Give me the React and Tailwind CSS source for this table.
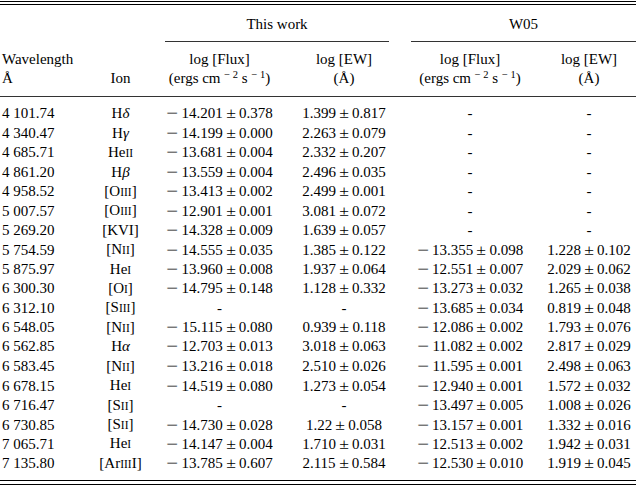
import React from "react";

const cols = "grid grid-cols-[92px_57px_141px_108px_144px_94px]";

const Sc = ({ children }) => <span className="text-[11.5px]">{children}</span>;
const G = ({ children }) => <span className="italic">{children}</span>;

const ions = {
  Hd: <>H<G>δ</G></>,
  Hg: <>H<G>γ</G></>,
  HeII: <>He<Sc>II</Sc></>,
  Hb: <>H<G>β</G></>,
  OIII: <>[O<Sc>III</Sc>]</>,
  KVI: <>[KVI]</>,
  NII: <>[N<Sc>II</Sc>]</>,
  HeI: <>He<Sc>I</Sc></>,
  OI: <>[O<Sc>I</Sc>]</>,
  SIII: <>[S<Sc>III</Sc>]</>,
  Ha: <>H<G>α</G></>,
  SII: <>[S<Sc>II</Sc>]</>,
  ArIIII: <>[Ar<Sc>III</Sc>I]</>,
};

const rows = [
  ["4 101.74", "Hd", "− 14.201 ± 0.378", "1.399 ± 0.817", "-", "-"],
  ["4 340.47", "Hg", "− 14.199 ± 0.000", "2.263 ± 0.079", "-", "-"],
  ["4 685.71", "HeII", "− 13.681 ± 0.004", "2.332 ± 0.207", "-", "-"],
  ["4 861.20", "Hb", "− 13.559 ± 0.004", "2.496 ± 0.035", "-", "-"],
  ["4 958.52", "OIII", "− 13.413 ± 0.002", "2.499 ± 0.001", "-", "-"],
  ["5 007.57", "OIII", "− 12.901 ± 0.001", "3.081 ± 0.072", "-", "-"],
  ["5 269.20", "KVI", "− 14.328 ± 0.009", "1.639 ± 0.057", "-", "-"],
  ["5 754.59", "NII", "− 14.555 ± 0.035", "1.385 ± 0.122", "− 13.355 ± 0.098", "1.228 ± 0.102"],
  ["5 875.97", "HeI", "− 13.960 ± 0.008", "1.937 ± 0.064", "− 12.551 ± 0.007", "2.029 ± 0.062"],
  ["6 300.30", "OI", "− 14.795 ± 0.148", "1.128 ± 0.332", "− 13.273 ± 0.032", "1.265 ± 0.038"],
  ["6 312.10", "SIII", "-", "-", "− 13.685 ± 0.034", "0.819 ± 0.048"],
  ["6 548.05", "NII", "− 15.115 ± 0.080", "0.939 ± 0.118", "− 12.086 ± 0.002", "1.793 ± 0.076"],
  ["6 562.85", "Ha", "− 12.703 ± 0.013", "3.018 ± 0.063", "− 11.082 ± 0.002", "2.817 ± 0.029"],
  ["6 583.45", "NII", "− 13.216 ± 0.018", "2.510 ± 0.026", "− 11.595 ± 0.001", "2.498 ± 0.063"],
  ["6 678.15", "HeI", "− 14.519 ± 0.080", "1.273 ± 0.054", "− 12.940 ± 0.001", "1.572 ± 0.032"],
  ["6 716.47", "SII", "-", "-", "− 13.497 ± 0.005", "1.008 ± 0.026"],
  ["6 730.85", "SII", "− 14.730 ± 0.028", "1.22 ± 0.058", "− 13.157 ± 0.001", "1.332 ± 0.016"],
  ["7 065.71", "HeI", "− 14.147 ± 0.004", "1.710 ± 0.031", "− 12.513 ± 0.002", "1.942 ± 0.031"],
  ["7 135.80", "ArIIII", "− 13.785 ± 0.607", "2.115 ± 0.584", "− 12.530 ± 0.010", "1.919 ± 0.045"],
];

function Num({ s }) {
  if (s === "-") return <span>-</span>;
  let neg = false;
  let t = s;
  if (t.startsWith("− ")) {
    neg = true;
    t = t.slice(2);
  }
  const [a, b] = t.split(" ± ");
  return (
    <span className="inline-flex items-baseline">
      {neg && <span className="inline-block scale-x-[1.4] origin-left mr-[7px]">−</span>}
      <span>{a}</span>
      <span className="inline-block scale-x-[1.18] mx-[4px]">±</span>
      <span>{b}</span>
    </span>
  );
}

const Units = () => (
  <>
    (ergs cm <sup className="text-[10.5px] top-[-0.45em]">− 2</sup> s <sup className="text-[10.5px] top-[-0.45em]">− 1</sup>)
  </>
);

export default function App() {
  return (
    <div
      className="w-[636px] h-[488px] bg-white text-black text-[15px] leading-[19px] overflow-hidden pt-px whitespace-nowrap"
      style={{ fontFamily: '"Liberation Serif", "Times New Roman", serif' }}
    >
      <div className="h-px bg-black" />
      <div className="h-px bg-black mt-[2px]" />

      <div className={`${cols} mt-[10px]`}>
        <div />
        <div />
        <div className="col-span-2 text-center pl-[16px] pr-[9px]">This work</div>
        <div className="col-span-2 text-center pl-[13px]">W05</div>
      </div>
      <div className={`${cols} mt-[7px]`}>
        <div />
        <div />
        <div className="col-span-2 pl-[16px] pr-[9px]">
          <div className="h-px bg-[#333]" />
        </div>
        <div className="col-span-2 pl-[13px]">
          <div className="h-px bg-[#333]" />
        </div>
      </div>

      <div className={`${cols} mt-[8px]`}>
        <div className="pl-[2px]">Wavelength</div>
        <div />
        <div className="text-center">log [Flux]</div>
        <div className="text-center">log [EW]</div>
        <div className="text-center">log [Flux]</div>
        <div className="text-center">log [EW]</div>
      </div>
      <div className={cols}>
        <div className="pl-[2px]">Å</div>
        <div className="text-center">Ion</div>
        <div className="text-center"><Units /></div>
        <div className="text-center">(Å)</div>
        <div className="text-center"><Units /></div>
        <div className="text-center">(Å)</div>
      </div>

      <div className="h-px bg-[#333] mt-[8px]" />

      <div className="pt-[7px]">
        {rows.map((r, i) => (
          <div key={i} className={`${cols} h-[19.44px] items-center`}>
            <div className="pl-[2px]">{r[0]}</div>
            <div className="text-center">{ions[r[1]]}</div>
            <div className="text-center"><Num s={r[2]} /></div>
            <div className="text-center"><Num s={r[3]} /></div>
            <div className="text-center"><Num s={r[4]} /></div>
            <div className="text-center"><Num s={r[5]} /></div>
          </div>
        ))}
      </div>

      <div className="h-px bg-black mt-[7px]" />
      <div className="h-px bg-black mt-[3px]" />
    </div>
  );
}
